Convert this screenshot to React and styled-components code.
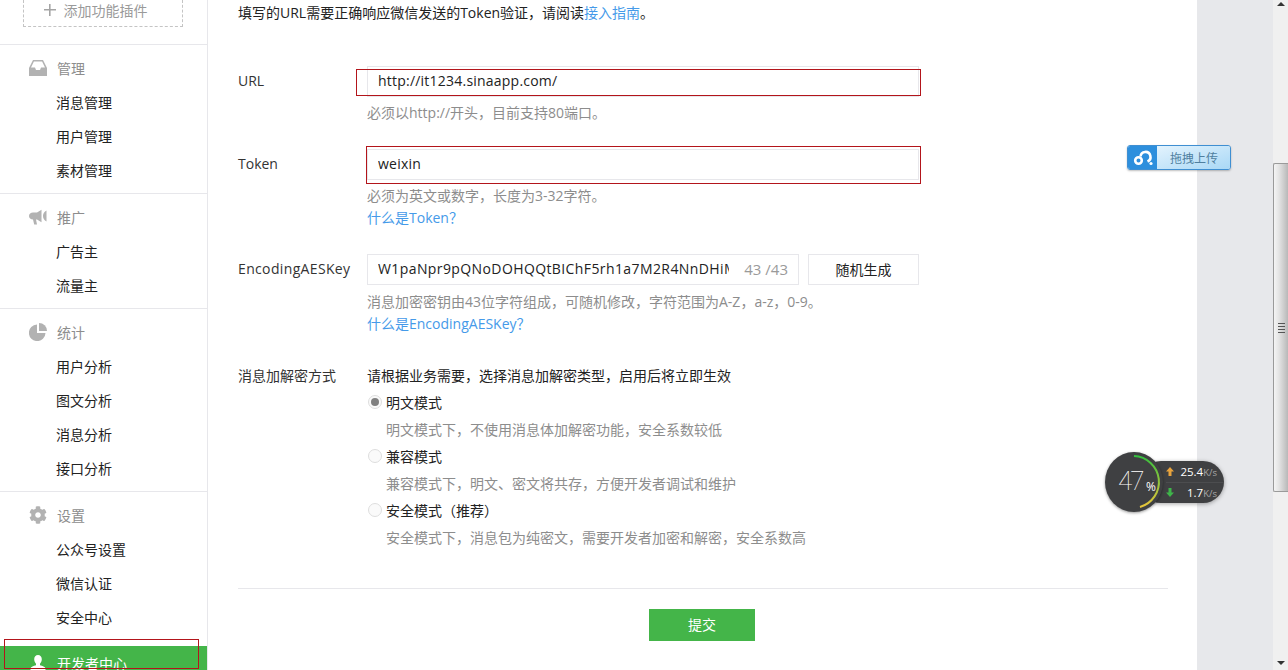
import React from "react";
import styled, { createGlobalStyle } from "styled-components";
import { FaCog } from "react-icons/fa";

const GlobalStyle = createGlobalStyle`
  html, body {
    margin: 0;
    padding: 0;
    height: 100%;
    overflow: hidden;
    background: #fff;
  }
  body {
    font-family: "Open Sans", "Noto Sans CJK SC", sans-serif;
    font-size: 14px;
    color: #222;
  }
  * { box-sizing: border-box; }
`;

const Page = styled.div`
  position: relative;
  display: flex;
  width: 1288px;
  height: 670px;
  overflow: hidden;
`;

const Sidebar = styled.aside`
  flex: 0 0 208px;
  height: 670px;
  overflow: hidden;
  border-right: 1px solid #e7e7eb;
`;

const PluginBox = styled.div`
  display: flex;
  align-items: center;
  justify-content: center;
  gap: 8px;
  width: 160px;
  height: 27px;
  margin: 0 0 17px 23px;
  padding: 0 15px 6px 0;
  border: 1px dashed #c4c4c4;
  border-top: none;
  color: #9a9a9a;
`;

const Section = styled.section`
  padding: 7px 0 5px;
  border-top: 1px solid #e7e7eb;
`;

const SectionHead = styled.div`
  display: flex;
  align-items: center;
  gap: 10px;
  height: 34px;
  padding: 0 0 2px 29px;
  color: #8d8d8d;
`;

const IconSlot = styled.span`
  display: flex;
  align-items: center;
  justify-content: center;
  width: 18px;
  height: 18px;
  color: #b2b2b2;
`;

const NavItem = styled.div`
  height: 34px;
  padding-left: 56px;
  line-height: 34px;
  color: #222;
`;

const ActiveItem = styled.div`
  display: flex;
  align-items: center;
  gap: 10px;
  height: 34px;
  margin-top: 6px;
  padding-left: 29px;
  background: #44b549;
  color: #fff;
`;

const Main = styled.main`
  flex: 0 0 989px;
  padding: 0 29px 0 30px;
`;

const Intro = styled.p`
  margin: 0 0 40px;
  line-height: 26px;
  color: #222;
`;

const Link = styled.a`
  color: #459ae9;
  text-decoration: none;
`;

const Row = styled.div`
  display: flex;
  margin-bottom: ${(p) => p.$gap}px;
`;

const Label = styled.div`
  flex: 0 0 129px;
  line-height: ${(p) => p.$line}px;
  letter-spacing: ${(p) => (p.$spaced ? "0.35px" : "0")};
  color: #333;
`;

const Control = styled.div`
  flex: 0 0 552px;
`;

const InputBox = styled.div`
  position: relative;
  display: flex;
  align-items: center;
  width: ${(p) => p.$width || 552}px;
  height: 31px;
  padding: 0 10px 2px;
  border: 1px solid #e7e7eb;
  color: #222;
  white-space: nowrap;
`;

const InputText = styled.span`
  flex: 1;
  overflow: hidden;
  letter-spacing: ${(p) => (p.$wide ? "0.4px" : "0.22px")};
`;

const Counter = styled.span`
  margin-left: 15px;
  font-size: 15px;
  color: #9a9a9a;
`;

const InputLine = styled.div`
  display: flex;
  gap: 9px;
`;

const GhostButton = styled.div`
  flex: 1;
  height: 31px;
  line-height: 29px;
  text-align: center;
  border: 1px solid #e7e7eb;
  color: #222;
`;

const Hint = styled.div`
  margin-top: ${(p) => p.$top || 0}px;
  line-height: 22px;
  color: #8d8d8d;
`;

const Line = styled.div`
  display: flex;
  align-items: center;
  height: 27px;
  padding: 0 0 2px ${(p) => p.$indent || 0}px;
  color: ${(p) => (p.$muted ? "#8d8d8d" : "#222")};
`;

const Radio = styled.span`
  position: relative;
  flex: 0 0 14px;
  width: 14px;
  height: 14px;
  margin: 0 4px 0 1px;
  border-radius: 50%;
  border: 1px solid #dedede;
  background: #fafafa;

  &::after {
    content: "";
    display: ${(p) => (p.$checked ? "block" : "none")};
    position: absolute;
    inset: 2px;
    border-radius: 50%;
    background: #808080;
  }
`;

const Divider = styled.hr`
  margin: 0;
  border: none;
  border-top: 1px solid #e7e7eb;
`;

const Toolbar = styled.div`
  display: flex;
  justify-content: center;
  padding: 20px 2px 0 0;
`;

const SubmitButton = styled.div`
  width: 106px;
  height: 32px;
  line-height: 32px;
  text-align: center;
  background: #44b549;
  color: #fff;
`;

const Gutter = styled.div`
  flex: 0 0 76px;
  background: #e7e8eb;
`;

const Scrollbar = styled.div`
  flex: 0 0 15px;
  display: flex;
  flex-direction: column;
  justify-content: space-between;
  align-items: center;
  padding: 2px 0 5px;
  background: #f0f0f0;
`;

const Arrow = styled.span`
  width: 0;
  height: 0;
  border-left: 4px solid transparent;
  border-right: 4px solid transparent;
  ${(p) => (p.$down ? "border-top: 4px solid #333;" : "border-bottom: 4px solid #333;")}
`;

const Thumb = styled.div`
  position: absolute;
  top: 163px;
  left: 1273px;
  display: flex;
  flex-direction: column;
  align-items: center;
  justify-content: center;
  gap: 2px;
  width: 15px;
  height: 329px;
  border: 1px solid #9a9a9a;
  border-right: none;
  border-radius: 2px 0 0 2px;
  background: linear-gradient(to right, #f4f4f4, #e4e4e4 35%, #b8b8b8);
`;

const Grip = styled.span`
  width: 7px;
  height: 1px;
  background: #555;
`;

const RedBox = styled.div`
  position: absolute;
  top: ${(p) => p.$top}px;
  left: ${(p) => p.$left}px;
  width: ${(p) => p.$width}px;
  height: ${(p) => p.$height}px;
  border: 1px solid #b3151b;
  pointer-events: none;
`;

const UploadButton = styled.div`
  position: absolute;
  top: 145px;
  left: 1127px;
  display: flex;
  width: 104px;
  height: 25px;
  overflow: hidden;
  border: 1px solid #3f8fd2;
  border-radius: 3px;
  box-shadow: 0 1px 2px rgba(0, 0, 0, 0.25);
`;

const UploadIcon = styled.span`
  display: flex;
  align-items: center;
  justify-content: center;
  flex: 0 0 29px;
  background: #2d8fdd;
`;

const UploadText = styled.span`
  flex: 1;
  padding-left: 13px;
  font-size: 12px;
  line-height: 25px;
  text-align: left;
  color: #4f7f9f;
  background: linear-gradient(to bottom right, #e3f3fd, #a9d8f6);
`;

const SpeedPill = styled.div`
  position: absolute;
  top: 461px;
  left: 1140px;
  display: flex;
  flex-direction: column;
  width: 84px;
  height: 42px;
  padding-left: 26px;
  border-radius: 21px;
  background: #3f4042;
  box-shadow: 0 1px 4px rgba(0, 0, 0, 0.35);
`;

const SpeedRow = styled.div`
  display: flex;
  align-items: center;
  justify-content: space-between;
  flex: 1;
  padding-right: 7px;
  font-family: "Open Sans", sans-serif;
  font-size: 11.5px;
  color: #fff;
  & + & { border-top: 1px solid #4c4d4f; }
`;

const SpeedUnit = styled.span`
  font-size: 9.5px;
  color: #a9a9a9;
`;

const SpeedDial = styled.div`
  position: absolute;
  top: 452px;
  left: 1105px;
  width: 58px;
  height: 60px;
  border-radius: 50%;
  background: #3f4042;
  box-shadow: 0 1px 3px rgba(0, 0, 0, 0.4);
`;

const DialArc = styled.svg`
  position: absolute;
  inset: 0;
`;

const DialValue = styled.span`
  position: absolute;
  top: 11px;
  left: 13px;
  font-family: Roboto, sans-serif;
  font-weight: 100;
  font-size: 26px;
  letter-spacing: -2px;
  line-height: 36px;
  color: #fff;
`;

const DialPercent = styled.span`
  position: absolute;
  top: 28px;
  left: 41px;
  font-family: "Open Sans", sans-serif;
  font-size: 12px;
  line-height: 14px;
  color: #fff;
`;

const InboxIcon = () => (
  <svg width="18" height="16" viewBox="0 0 18 16">
    <path
      fill="currentColor"
      fillRule="evenodd"
      d="M4 0h10l4 8v8H0V8zM4.900 1.500 2 7.500h4l1 2.500h4l1-2.500h4l-2.900-6z"
    />
  </svg>
);

const MegaphoneIcon = () => (
  <svg width="18" height="17" viewBox="0 0 18 17">
    <path
      fill="currentColor"
      d="M4 3.500h4L12.500 0.800v12.400L8 10.500H7l1 5H5.200L4 10.500C1.800 10.500 0 9 0 7s1.800-3.500 4-3.500zM17.500 1.500C15.300 2.500 14 4.500 14 7s1.300 4.500 3.500 5.500z"
    />
  </svg>
);

const PieIcon = () => (
  <svg width="18" height="18" viewBox="0 0 18 18">
    <path fill="currentColor" d="M8 1.500V10h8.500A8.300 8.300 0 1 1 8 1.500z" />
    <path fill="currentColor" d="M10 0a8 8 0 0 1 8 8h-8z" />
  </svg>
);

const UserIcon = () => (
  <svg width="16" height="17" viewBox="0 0 16 17">
    <path
      fill="#fff"
      d="M8 0c2.300 0 3.800 1.800 3.800 4.300 0 1.900-.8 3.500-1.800 4.400v1.500c2.500.7 5 1.600 5.500 3V17H.5v-3.800c.5-1.400 3-2.300 5.500-3V8.700C5 7.800 4.200 6.200 4.200 4.300 4.200 1.800 5.700 0 8 0z"
    />
  </svg>
);

const PlusIcon = () => (
  <svg width="12" height="12" viewBox="0 0 12 12">
    <path fill="#a5a5a5" d="M5 0h1.600v5H12v1.600H6.600V12H5V6.600H0V5h5z" />
  </svg>
);

const CloudIcon = () => (
  <svg width="22" height="18" viewBox="0 0 22 18">
    <circle cx="6.500" cy="11.500" r="3.300" fill="none" stroke="#fff" strokeWidth="2.600" />
    <path d="M8.500 7.500a5 5 0 1 1 7 5" fill="none" stroke="#fff" strokeWidth="2.600" />
    <circle cx="19" cy="14.500" r="1.600" fill="#fff" />
  </svg>
);

const nav = [
  { title: "管理", icon: <InboxIcon />, items: ["消息管理", "用户管理", "素材管理"] },
  { title: "推广", icon: <MegaphoneIcon />, items: ["广告主", "流量主"] },
  { title: "统计", icon: <PieIcon />, items: ["用户分析", "图文分析", "消息分析", "接口分析"] },
  { title: "设置", icon: <FaCog size={18} />, items: ["公众号设置", "微信认证", "安全中心"] },
];

// full-width punctuation is kept as escapes so it can't get flattened to ascii
const modes = [
  { name: "明文模式", desc: "明文模式下\uFF0C不使用消息体加解密功能\uFF0C安全系数较低", checked: true },
  { name: "兼容模式", desc: "兼容模式下\uFF0C明文、密文将共存\uFF0C方便开发者调试和维护" },
  { name: "安全模式\uFF08推荐\uFF09", desc: "安全模式下\uFF0C消息包为纯密文\uFF0C需要开发者加密和解密\uFF0C安全系数高" },
];

function App() {
  return (
    <Page>
      <GlobalStyle />
      <Sidebar>
        <PluginBox>
          <PlusIcon />
          添加功能插件
        </PluginBox>
        {nav.map((group) => (
          <Section key={group.title}>
            <SectionHead>
              <IconSlot>{group.icon}</IconSlot>
              {group.title}
            </SectionHead>
            {group.items.map((item) => (
              <NavItem key={item}>{item}</NavItem>
            ))}
          </Section>
        ))}
        <ActiveItem>
          <IconSlot>
            <UserIcon />
          </IconSlot>
          开发者中心
        </ActiveItem>
      </Sidebar>

      <Main>
        <Intro>
          {"填写的URL需要正确响应微信发送的Token验证\uFF0C请阅读"}<Link>接入指南</Link>。
        </Intro>

        <Row $gap={25}>
          <Label $line={29}>URL</Label>
          <Control>
            <InputBox>
              <InputText>http://it1234.sinaapp.com/</InputText>
            </InputBox>
            <Hint $top={5}>{"必须以http://开头\uFF0C目前支持80端口。"}</Hint>
          </Control>
        </Row>

        <Row $gap={25}>
          <Label $line={29}>Token</Label>
          <Control>
            <InputBox>
              <InputText>weixin</InputText>
            </InputBox>
            <Hint $top={5}>{"必须为英文或数字\uFF0C长度为3-32字符。"}</Hint>
            <Hint>
              <Link>{"什么是Token\uFF1F"}</Link>
            </Hint>
          </Control>
        </Row>

        <Row $gap={27}>
          <Label $line={29} $spaced>EncodingAESKey</Label>
          <Control>
            <InputLine>
              <InputBox $width={432}>
                <InputText $wide>W1paNpr9pQNoDOHQQtBIChF5rh1a7M2R4NnDHiM</InputText>
                <Counter>43 /43</Counter>
              </InputBox>
              <GhostButton>随机生成</GhostButton>
            </InputLine>
            <Hint $top={6}>{"消息加密密钥由43位字符组成\uFF0C可随机修改\uFF0C字符范围为A-Z\uFF0Ca-z\uFF0C0-9。"}</Hint>
            <Hint>
              <Link>{"什么是EncodingAESKey\uFF1F"}</Link>
            </Hint>
          </Control>
        </Row>

        <Row $gap={37}>
          <Label $line={27}>消息加解密方式</Label>
          <Control>
            <Line>{"请根据业务需要\uFF0C选择消息加解密类型\uFF0C启用后将立即生效"}</Line>
            {modes.map((mode) => (
              <React.Fragment key={mode.name}>
                <Line>
                  <Radio $checked={mode.checked} />
                  {mode.name}
                </Line>
                <Line $muted $indent={19}>
                  {mode.desc}
                </Line>
              </React.Fragment>
            ))}
          </Control>
        </Row>

        <Divider />
        <Toolbar>
          <SubmitButton>提交</SubmitButton>
        </Toolbar>
      </Main>

      <Gutter />
      <Scrollbar>
        <Arrow />
        <Arrow $down />
      </Scrollbar>
      <Thumb>
        <Grip />
        <Grip />
        <Grip />
        <Grip />
      </Thumb>

      <RedBox $top={69} $left={356} $width={565} $height={27} />
      <RedBox $top={146} $left={366} $width={555} $height={38} />
      <RedBox $top={639} $left={4} $width={195} $height={30} />

      <UploadButton>
        <UploadIcon>
          <CloudIcon />
        </UploadIcon>
        <UploadText>拖拽上传</UploadText>
      </UploadButton>

      <SpeedPill>
        <SpeedRow>
          <svg width="8" height="9" viewBox="0 0 8 9">
            <path fill="#e8a33d" d="M4 0l4 4.500H5.500V9h-3V4.500H0z" />
          </svg>
          <span>
            25.4<SpeedUnit>K/s</SpeedUnit>
          </span>
        </SpeedRow>
        <SpeedRow>
          <svg width="8" height="9" viewBox="0 0 8 9">
            <path fill="#3fb54a" d="M4 9L0 4.500h2.500V0h3v4.500H8z" />
          </svg>
          <span>
            1.7<SpeedUnit>K/s</SpeedUnit>
          </span>
        </SpeedRow>
      </SpeedPill>
      <SpeedDial>
        <DialArc width="58" height="60" viewBox="0 0 58 60">
          <defs>
            <linearGradient id="dialArc" x1="0" y1="0" x2="0" y2="1">
              <stop offset="0" stopColor="#35c13f" />
              <stop offset="1" stopColor="#e8c53a" />
            </linearGradient>
          </defs>
          <path
            d="M29 4A26 26 0 0 1 35 55"
            fill="none"
            stroke="url(#dialArc)"
            strokeWidth="2"
          />
        </DialArc>
        <DialValue>47</DialValue>
        <DialPercent>%</DialPercent>
      </SpeedDial>
    </Page>
  );
}

export default App;
